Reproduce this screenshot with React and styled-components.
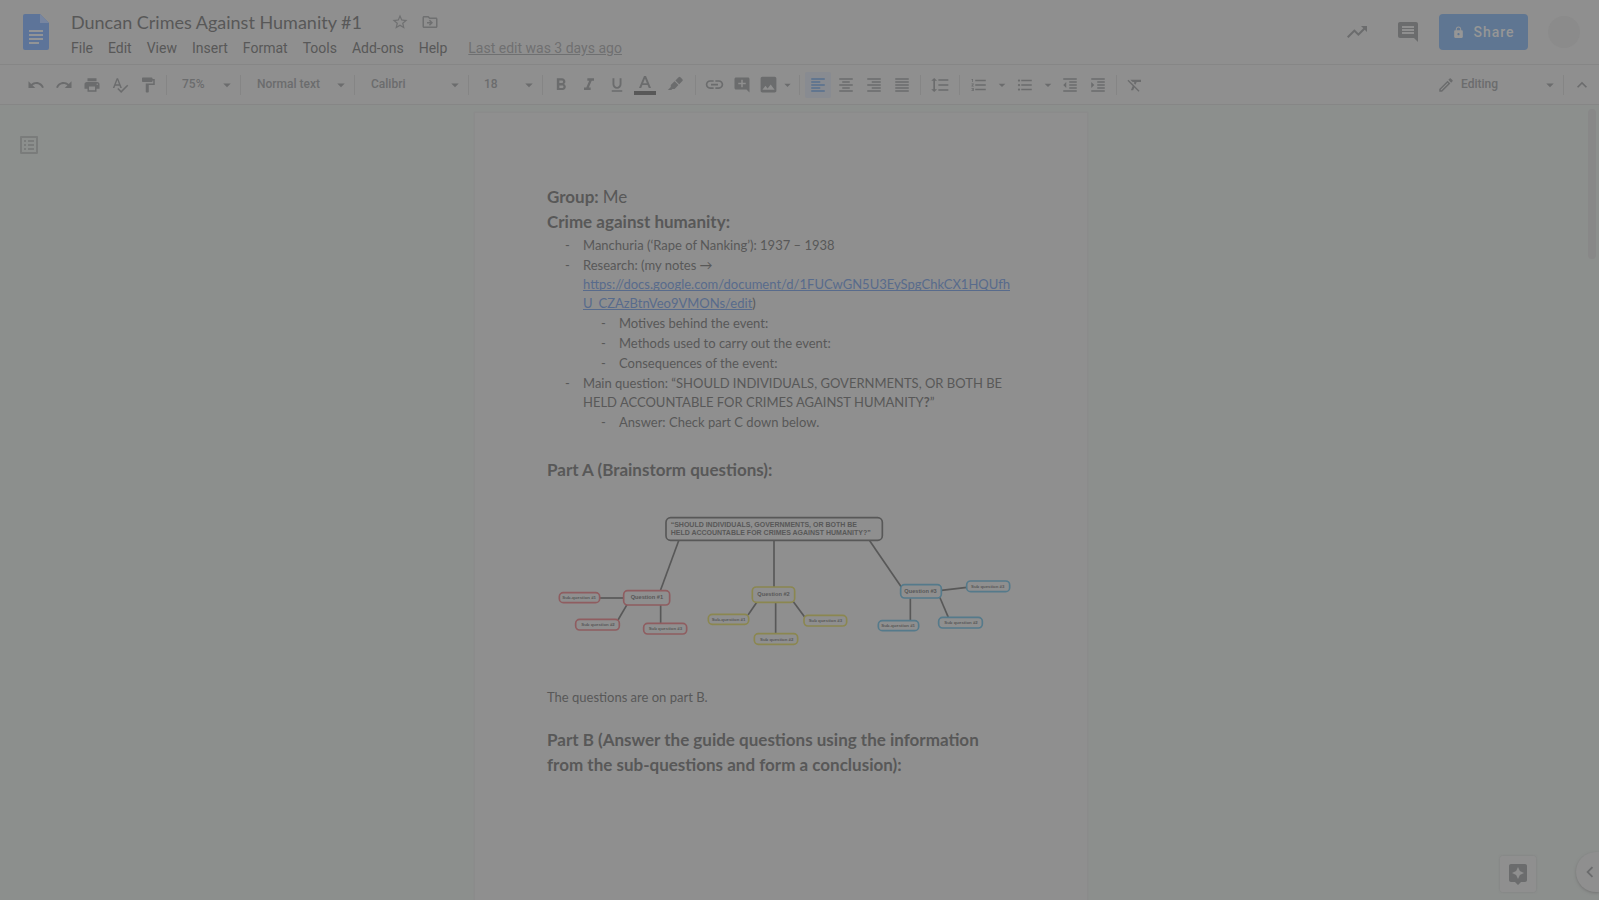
import React from "react";
import styled, { createGlobalStyle, css } from "styled-components";
import {
  MdUndo, MdRedo, MdPrint, MdSpellcheck, MdFormatPaint, MdFormatBold, MdFormatItalic,
  MdFormatUnderlined, MdLink, MdAddComment, MdImage, MdFormatAlignLeft, MdFormatAlignCenter,
  MdFormatAlignRight, MdFormatAlignJustify, MdFormatLineSpacing, MdFormatListNumbered,
  MdFormatListBulleted, MdFormatIndentDecrease, MdFormatIndentIncrease, MdFormatClear,
  MdArrowDropDown, MdOutlineEdit, MdKeyboardArrowUp, MdKeyboardArrowLeft, MdStarBorder,
  MdOutlineDriveFileMove, MdTrendingUp, MdComment, MdLock, MdOutlineListAlt, MdAssistant,
} from "react-icons/md";

const c = {
  paper: "#8f8f8f",
  canvas: "#8c8f8d",
  line: "#868686",
  ink: "#585858",
  icon: "#6b6c6d",
  muted: "#6f7071",
  link: "#586b8c",
  share: "#5f7692",
};

const Global = createGlobalStyle`
  * { box-sizing: border-box; }
  body { margin: 0; background: ${c.canvas}; color: ${c.ink}; font-family: Roboto, "Liberation Sans", sans-serif; }
  button, input, select { font: inherit; color: inherit; border: 0; background: none; margin: 0; padding: 0; }
  button svg { display: block; }
`;

const Shell = styled.div`
  display: flex;
  flex-direction: column;
  height: 100vh;
  overflow: hidden;
`;

const Header = styled.header`
  display: flex;
  flex: none;
  align-items: flex-start;
  height: 65px;
  padding: 0 19px 0 23px;
  background: ${c.paper};
  border-bottom: 1px solid ${c.line};
`;

const Logo = styled.a`
  display: block;
  height: 36px;
  margin: 14px 15px 0 0;
`;

const Heading = styled.div`
  flex: 1;
  padding-top: 8px;
`;

const TitleRow = styled.div`
  display: flex;
  align-items: center;
  height: 28px;
`;

const Title = styled.input`
  width: 327px;
  padding-left: 7px;
  font-family: Lato, sans-serif;
  font-size: 18px;
  line-height: 28px;
`;

const TitleAction = styled.button`
  width: 30px;
  color: ${c.muted};
`;

const Menus = styled.nav`
  display: flex;
  height: 24px;
  font-size: 14px;
  line-height: 24px;
`;

const MenuButton = styled.button`
  padding: 0 8px 0 7px;
  white-space: nowrap;
`;

const LastEdit = styled.a`
  margin-left: 13px;
  color: ${c.muted};
`;

const HeaderActions = styled.div`
  display: flex;
  align-items: center;
  height: 64px;
`;

const HeaderIcon = styled.button`
  width: 24px;
  margin-right: ${(p) => p.$gap}px;
  color: ${c.icon};
`;

const Share = styled.button`
  display: flex;
  align-items: center;
  justify-content: center;
  gap: 8px;
  width: 89px;
  height: 36px;
  margin-right: 20px;
  border-radius: 4px;
  background: ${c.share};
  color: #969696;
  font-size: 14px;
  font-weight: 500;
  letter-spacing: 1px;
`;

const Avatar = styled.button`
  width: 32px;
  height: 32px;
  border-radius: 50%;
  background: #8b8b8b;
`;

const Toolbar = styled.div`
  display: flex;
  flex: none;
  align-items: center;
  height: 40px;
  padding: 0 3px 0 22px;
  background: ${c.paper};
  border-bottom: 1px solid ${c.line};
  color: ${c.icon};
`;

const Tool = styled.button`
  display: flex;
  flex: none;
  align-items: center;
  justify-content: center;
  width: ${(p) => p.$width || 26}px;
  height: 26px;
  margin: 0 ${(p) => (p.$width ? 0 : 1)}px;
  border-radius: 2px;
  ${(p) => p.$active && css`
    background: #888b91;
    color: #56708f;
  `}
`;

const Divider = styled.span`
  flex: none;
  width: 1px;
  height: 20px;
  margin: 0 4px;
  background: #858585;
`;

const Spacer = styled.span`
  flex: 1;
`;

const PickerBox = styled.label`
  position: relative;
  display: flex;
  flex: none;
  align-items: center;
  width: ${(p) => p.$width}px;
  height: 26px;
  font-size: 12px;
  font-weight: 500;

  select {
    width: 100%;
    height: 24px;
    margin-bottom: 2px;
    padding-left: ${(p) => p.$indent}px;
    appearance: none;
    outline: 0;
  }
  > svg {
    position: absolute;
    right: 0;
    pointer-events: none;
  }
`;

const Canvas = styled.main`
  position: relative;
  display: flex;
  flex: 1;
  justify-content: center;
  min-height: 0;
  padding: 8px 37px 0 0;
`;

const OutlineButton = styled.button`
  position: absolute;
  top: 28px;
  left: 17px;
  color: #7a7c7b;
`;

const Scrollbar = styled.div`
  position: absolute;
  top: 4px;
  right: 3px;
  width: 8px;
  height: 150px;
  border-radius: 4px;
  background: #888888;
`;

const Explore = styled.button`
  position: absolute;
  right: 63px;
  bottom: 8px;
  display: flex;
  align-items: center;
  justify-content: center;
  width: 36px;
  height: 36px;
  border-radius: 2px;
  background: ${c.paper};
  box-shadow: 0 0 2px #7c7c7c;
  color: ${c.icon};
`;

const SideTab = styled.button`
  position: absolute;
  right: 0;
  bottom: 8px;
  width: 23px;
  height: 40px;
  padding-left: 3px;
  border-radius: 20px 0 0 20px;
  background: ${c.paper};
  box-shadow: 0 1px 3px #747474;
  color: ${c.icon};
`;

const Page = styled.article`
  width: 612px;
  height: 100%;
  padding: 71px 72px 0;
  overflow: hidden;
  background: ${c.paper};
  box-shadow: 0 0 1px 1px #8b8b8b;
  font-family: Lato, sans-serif;
`;

const SectionTitle = styled.h2`
  margin: ${(p) => p.$top || 0}px 0 0;
  font-size: 17px;
  font-weight: 700;
  line-height: 25px;
  white-space: nowrap;

  span { font-weight: 400; }
`;

const Paragraph = styled.p`
  margin: 28px 0 0;
  font-size: 13px;
  line-height: 19px;
`;

const DashList = styled.ul`
  margin: ${(p) => (p.$nested ? 1 : 2)}px 0 0;
  padding-left: 36px;
  font-size: 13px;
  line-height: 19px;
  list-style: none;

  li + li { margin-top: 1px; }
  li::before {
    content: "-";
    float: left;
    width: 18px;
    margin-left: -18px;
  }
`;

const DocLink = styled.a`
  color: ${c.link};
  text-decoration-skip-ink: none;
`;

const MindMap = styled.svg`
  display: block;
  width: 100%;
  height: 160px;
  margin-top: 18px;
  font-family: "Liberation Sans", Arial, sans-serif;
  font-weight: 700;
  fill: ${c.ink};
`;

const red = "#8f5d60";
const yellow = "#8b8750";
const blue = "#557a8b";

const edges = [
  [446, 272, 391, 422], [732, 272, 732, 411], [1019, 272, 1114, 411],
  [209, 444, 281, 444], [291, 464, 264, 510], [392, 465, 392, 520],
  [681, 456, 654, 495], [737, 456, 737, 549], [789, 454, 824, 501],
  [1141, 445, 1141, 512], [1229, 441, 1255, 502], [1234, 421, 1311, 412],
];

const nodes = [
  [281, 422, 138, 43, red, "Question #1", 302, 448],
  [88, 428, 121, 30, red, "Sub-question #1", 97, 447],
  [137, 508, 131, 32, red, "Sub question #2", 154, 528],
  [341, 520, 129, 32, red, "Sub question #3", 356, 541],
  [667, 411, 127, 46, yellow, "Question #2", 682, 437],
  [535, 493, 121, 30, yellow, "Sub-question #1", 545, 512],
  [673, 551, 130, 32, yellow, "Sub question #2", 690, 572],
  [822, 496, 128, 32, yellow, "Sub question #3", 836, 517],
  [1112, 404, 122, 40, blue, "Question #3", 1123, 429],
  [1045, 512, 121, 30, blue, "Sub-question #1", 1054, 532],
  [1226, 502, 131, 32, blue, "Sub question #2", 1243, 523],
  [1310, 393, 129, 32, blue, "Sub question #3", 1323, 413],
];

function Arrow() {
  return <MdArrowDropDown size={18} />;
}

function Picker({ label, value, width, indent }) {
  return (
    <PickerBox $width={width} $indent={indent}>
      <select aria-label={label} defaultValue={value}>
        <option>{value}</option>
      </select>
      <Arrow />
    </PickerBox>
  );
}

function Button({ label, icon: Icon, size = 18, ...rest }) {
  return (
    <Tool type="button" aria-label={label} {...rest}>
      <Icon size={size} />
    </Tool>
  );
}

function TextColorIcon() {
  return (
    <svg width="22" height="22" viewBox="0 0 22 22">
      <path fill="currentColor" d="M10 2h2l5 12h-2.200l-1.200-3H8.400l-1.200 3H5zM11 4.500 9.100 9.200h3.800z" />
      <path fill={c.ink} d="M0 17h22v4H0z" />
    </svg>
  );
}

function HighlighterIcon() {
  return (
    <svg width="18" height="18" viewBox="0 0 18 18" fill="currentColor">
      <path d="M12.600 1.200a1.300 1.300 0 0 1 1.800 0l2 2a1.300 1.300 0 0 1 0 1.800l-3.200 3.200-3.800-3.800zM8.600 5.200l3.800 3.800-3.800 3.900H6.400L5.200 14H1.900l2.900-3V9z" />
    </svg>
  );
}

function DocsLogo() {
  return (
    <svg width="26" height="36" viewBox="0 0 26 36">
      <path fill="#5d7499" d="M2 0h15l9 9v25a2 2 0 0 1-2 2H2a2 2 0 0 1-2-2V2a2 2 0 0 1 2-2z" />
      <path fill="#7785a0" d="M17 0l9 9h-9z" />
      <path fill="#929496" d="M6 16h14v2H6zM6 20h14v2H6zM6 24h14v2H6zM6 28h10v2H6z" />
    </svg>
  );
}

function BrainstormMap() {
  return (
    <MindMap viewBox="51 150 1404 480" role="img" aria-label="Brainstorm map">
      {edges.map(([x1, y1, x2, y2]) => (
        <line key={`${x1}-${y1}-${x2}`} x1={x1} y1={y1} x2={x2} y2={y2} stroke={c.ink} strokeWidth="5" />
      ))}
      <rect x="408" y="203" width="649" height="68" rx="14" fill={c.paper} stroke={c.ink} strokeWidth="5" />
      <text fontSize="21" x="422" y="230">“SHOULD INDIVIDUALS, GOVERNMENTS, OR BOTH BE</text>
      <text fontSize="21" x="422" y="255">HELD ACCOUNTABLE FOR CRIMES AGAINST HUMANITY?”</text>
      {nodes.map(([x, y, w, h, color, label, tx, ty]) => (
        <g key={`${x}-${y}`}>
          <rect x={x} y={y} width={w} height={h} rx="12" fill={c.paper} stroke={color} strokeWidth="5" />
          <text x={tx} y={ty} fontSize={label.startsWith("Sub") ? 13 : 17}>{label}</text>
        </g>
      ))}
    </MindMap>
  );
}

export default function App() {
  return (
    <Shell>
      <Global />
      <Header>
        <Logo href="#home" aria-label="Docs home"><DocsLogo /></Logo>
        <Heading>
          <TitleRow>
            <Title aria-label="Document title" defaultValue="Duncan Crimes Against Humanity #1" />
            <TitleAction aria-label="Star"><MdStarBorder size={18} /></TitleAction>
            <TitleAction aria-label="Move"><MdOutlineDriveFileMove size={18} /></TitleAction>
          </TitleRow>
          <Menus>
            {["File", "Edit", "View", "Insert", "Format", "Tools", "Add-ons", "Help"].map((name) => (
              <MenuButton key={name} type="button">{name}</MenuButton>
            ))}
            <LastEdit href="#history">Last edit was 3 days ago</LastEdit>
          </Menus>
        </Heading>
        <HeaderActions>
          <HeaderIcon $gap={27} aria-label="Activity"><MdTrendingUp size={24} /></HeaderIcon>
          <HeaderIcon $gap={19} aria-label="Comments"><MdComment size={24} /></HeaderIcon>
          <Share type="button"><MdLock size={13} />Share</Share>
          <Avatar aria-label="Account" />
        </HeaderActions>
      </Header>

      <Toolbar role="toolbar" aria-label="Formatting">
        <Button label="Undo" icon={MdUndo} />
        <Button label="Redo" icon={MdRedo} />
        <Button label="Print" icon={MdPrint} />
        <Button label="Spelling" icon={MdSpellcheck} />
        <Button label="Paint format" icon={MdFormatPaint} />
        <Divider />
        <Picker label="Zoom" value="75%" width={65} indent={11} />
        <Divider />
        <Picker label="Style" value="Normal text" width={105} indent={12} />
        <Divider />
        <Picker label="Font" value="Calibri" width={105} indent={12} />
        <Divider />
        <Picker label="Font size" value="18" width={65} indent={11} />
        <Divider />
        <Button label="Bold" icon={MdFormatBold} size={20} />
        <Button label="Italic" icon={MdFormatItalic} size={20} />
        <Button label="Underline" icon={MdFormatUnderlined} />
        <Button label="Text color" icon={TextColorIcon} />
        <Button label="Highlight" icon={HighlighterIcon} $width={32} />
        <Divider />
        <Button label="Link" icon={MdLink} size={21} />
        <Button label="Add comment" icon={MdAddComment} />
        <Button label="Image" icon={MdImage} size={21} $width={24} />
        <Button label="Image options" icon={Arrow} $width={15} />
        <Divider />
        <Button label="Align left" icon={MdFormatAlignLeft} $active />
        <Button label="Align center" icon={MdFormatAlignCenter} />
        <Button label="Align right" icon={MdFormatAlignRight} />
        <Button label="Justify" icon={MdFormatAlignJustify} />
        <Divider />
        <Button label="Line spacing" icon={MdFormatLineSpacing} size={20} $width={30} />
        <Divider />
        <Button label="Numbered list" icon={MdFormatListNumbered} $width={30} />
        <Button label="Numbered list options" icon={Arrow} $width={16} />
        <Button label="Bulleted list" icon={MdFormatListBulleted} $width={30} />
        <Button label="Bulleted list options" icon={Arrow} $width={16} />
        <Button label="Decrease indent" icon={MdFormatIndentDecrease} />
        <Button label="Increase indent" icon={MdFormatIndentIncrease} />
        <Divider />
        <Button label="Clear formatting" icon={MdFormatClear} />
        <Spacer />
        <MdOutlineEdit size={18} />
        <Picker label="Mode" value="Editing" width={104} indent={6} />
        <Divider />
        <Button label="Hide menus" icon={MdKeyboardArrowUp} size={20} />
      </Toolbar>

      <Canvas>
        <OutlineButton aria-label="Show outline"><MdOutlineListAlt size={24} /></OutlineButton>
        <Page>
          <SectionTitle>Group: <span>Me</span></SectionTitle>
          <SectionTitle>Crime against humanity:</SectionTitle>
          <DashList>
            <li>Manchuria (‘Rape of Nanking’): 1937 – 1938</li>
            <li>
              Research: (my notes →<br />
              <DocLink href="#notes">
                https://docs.google.com/document/d/1FUCwGN5U3EySpgChkCX1HQUfh<br />U_CZAzBtnVeo9VMONs/edit
              </DocLink>)
              <DashList $nested>
                <li>Motives behind the event:</li>
                <li>Methods used to carry out the event:</li>
                <li>Consequences of the event:</li>
              </DashList>
            </li>
            <li>
              Main question: “SHOULD INDIVIDUALS, GOVERNMENTS, OR BOTH BE<br />
              HELD ACCOUNTABLE FOR CRIMES AGAINST HUMANITY<b>?</b>”
              <DashList $nested>
                <li>Answer: Check part C down below.</li>
              </DashList>
            </li>
          </DashList>
          <SectionTitle $top={25}>Part A (Brainstorm questions):</SectionTitle>
          <BrainstormMap />
          <Paragraph>The questions are on part B.</Paragraph>
          <SectionTitle $top={20}>
            Part B (Answer the guide questions using the information<br />
            from the sub-questions and form a conclusion):
          </SectionTitle>
        </Page>
        <Scrollbar />
        <Explore aria-label="Explore"><MdAssistant size={24} /></Explore>
        <SideTab aria-label="Show side panel"><MdKeyboardArrowLeft size={22} /></SideTab>
      </Canvas>
    </Shell>
  );
}
